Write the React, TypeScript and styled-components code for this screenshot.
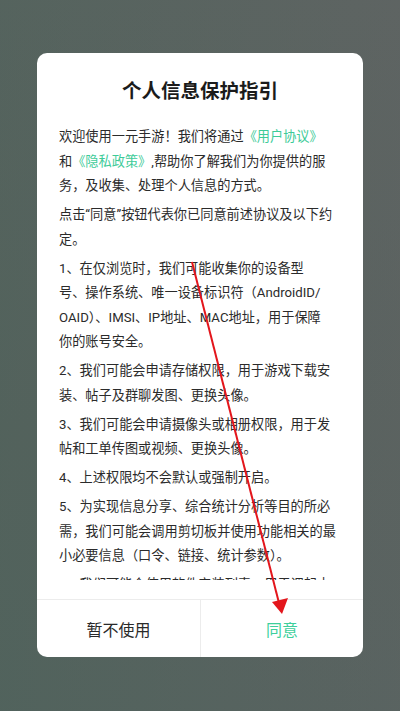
import React from "react";
import styled, { createGlobalStyle } from "styled-components";

const GlobalStyle = createGlobalStyle`
    * { box-sizing: border-box; }
    body {
        margin: 0;
        font-family: Roboto, "Noto Sans CJK SC", sans-serif;
    }
`

function getParagraphs(): React.ReactNode[][] {
    return [
        [
            <>欢迎使用一元手游！我们将通过<Link>《用户协议》</Link></>,
            <>和<Link>《隐私政策》</Link>,帮助你了解我们为你提供的服</>,
            "务，及收集、处理个人信息的方式。",
        ],
        ["点击“同意”按钮代表你已同意前述协议及以下约", "定。"],
        [
            "1、在仅浏览时，我们可能收集你的设备型",
            "号、操作系统、唯一设备标识符（AndroidID/",
            "OAID）、IMSI、IP地址、MAC地址，用于保障",
            "你的账号安全。",
        ],
        ["2、我们可能会申请存储权限，用于游戏下载安", "装、帖子及群聊发图、更换头像。"],
        ["3、我们可能会申请摄像头或相册权限，用于发", "帖和工单传图或视频、更换头像。"],
        ["4、上述权限均不会默认或强制开启。"],
        [
            "5、为实现信息分享、综合统计分析等目的所必",
            "需，我们可能会调用剪切板并使用功能相关的最",
            "小必要信息（口令、链接、统计参数）。",
        ],
        ["6、我们可能会使用软件安装列表，用于调起本", "地游戏及相关应用。"],
    ]
}

function App() {
    const paragraphs = getParagraphs()
    return (
        <Page>
            <GlobalStyle />
            <Dialog>
                <Title>个人信息保护指引</Title>
                <Body>
                    {paragraphs.map((lines, i) => (
                        <Para key={i}>
                            {lines.map((line, j) => <Line key={j}>{line}</Line>)}
                        </Para>
                    ))}
                </Body>
                <Footer>
                    <FooterButton>暂不使用</FooterButton>
                    <FooterButton $primary>同意</FooterButton>
                </Footer>
            </Dialog>
            <Arrow viewBox="0 0 400 711" width="400" height="711">
                <line x1="192" y1="262" x2="279" y2="603" stroke="#e3161c" strokeWidth="2" />
                <polygon points="272,602 288,598 282,614" fill="#e3161c" />
            </Arrow>
        </Page>
    )
}

export default App

const Page = styled.div`
    position: relative;
    width: 100%;
    height: 711px;
    display: flex;
    justify-content: center;
    align-items: flex-start;
    padding-top: 53px;
    overflow: hidden;
    background:
        linear-gradient(90deg, rgba(72, 98, 86, 0.35) 0%, rgba(100, 100, 100, 0.25) 100%),
        linear-gradient(180deg, #5c6462 0%, #58625f 60%, #566360 100%);
`

const Dialog = styled.div`
    width: 326px;
    height: 604px;
    background: #fff;
    border-radius: 10px;
    display: flex;
    flex-direction: column;
    overflow: hidden;
`

const Title = styled.h2`
    margin: 23px 0 21px;
    font-family: "Noto Sans CJK SC", sans-serif;
    font-size: 19.5px;
    font-weight: 700;
    line-height: 28px;
    text-align: center;
    color: #1b1b1b;
`

const Body = styled.div`
    flex: 1;
    overflow: hidden;
    padding: 0 20px 0 22px;
    margin-bottom: 19px;
`

const Para = styled.p`
    margin: 0 0 4.5px;
    font-size: 13.2px;
    line-height: 24.5px;
    color: #2b2b2b;
`

const Line = styled.span`
    display: block;
    white-space: nowrap;
`

const Link = styled.span`
    color: #3dcb98;
`

const Footer = styled.div`
    height: 58px;
    border-top: 1px solid #ececec;
    display: grid;
    grid-template-columns: 1fr 1fr;
`

const FooterButton = styled.button<{ $primary?: boolean }>`
    display: flex;
    align-items: center;
    justify-content: center;
    height: 100%;
    border: none;
    background: none;
    padding: 0;
    font-family: "Noto Sans CJK SC", sans-serif;
    font-size: 16px;
    line-height: 24px;
    color: ${p => p.$primary ? "#3dcf9c" : "#2a2a2a"};
    border-left: ${p => p.$primary ? "1px solid #ececec" : "none"};
`

const Arrow = styled.svg`
    position: absolute;
    left: 0;
    top: 0;
    pointer-events: none;
`
